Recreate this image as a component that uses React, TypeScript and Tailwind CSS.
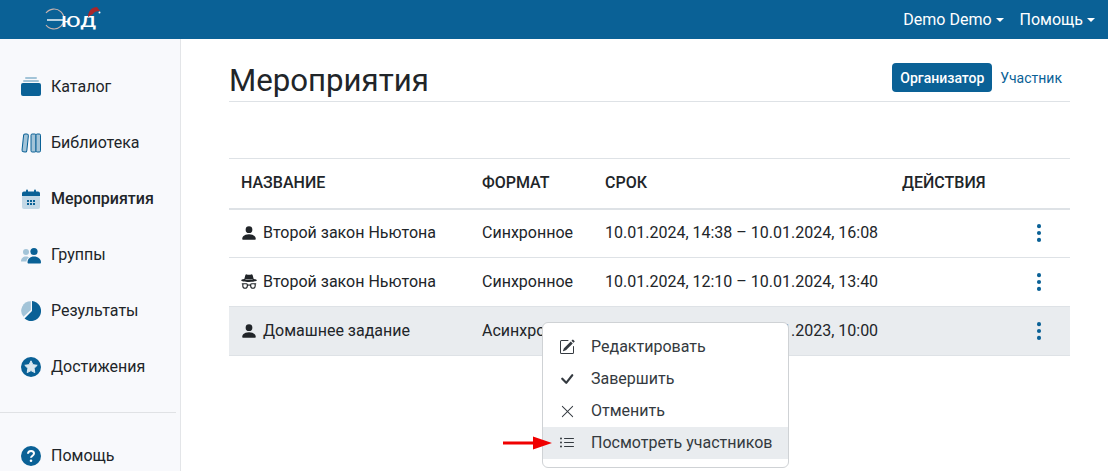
import React from "react";
import { BsPencilSquare, BsCheck, BsXLg, BsListUl, BsPersonFill, BsIncognito, BsThreeDotsVertical } from "react-icons/bs";

const BLUE = "#0a6196";
const LIGHT = "#a3c4d8";

const Catalog = () => (
  <svg width="20" height="20" viewBox="0 0 20 20">
    <rect x="4" y="0" width="12" height="2" rx="1" fill={LIGHT} />
    <rect x="2" y="3" width="16" height="2" rx="1" fill={LIGHT} />
    <rect x="0" y="6" width="20" height="13" rx="2" fill={BLUE} />
  </svg>
);
const Library = () => (
  <svg width="20" height="20" viewBox="0 0 20 20">
    <rect x="1.800" y="1" width="4.800" height="18" rx="1.600" fill={LIGHT} stroke={BLUE} strokeWidth="1" transform="rotate(6 4.400 10)" />
    <rect x="10" y="1" width="5" height="18" rx="1.200" fill={LIGHT} stroke={BLUE} strokeWidth="1" />
    <rect x="15" y="1" width="4.500" height="18" rx="1.200" fill={LIGHT} stroke={BLUE} strokeWidth="1" />
  </svg>
);
const Calendar = () => (
  <svg width="20" height="20" viewBox="0 0 20 20">
    <rect x="1" y="6" width="18" height="14" rx="2" fill="#c3d8e6" />
    <path d="M3 2.500h14a2 2 0 0 1 2 2V7H1V4.500a2 2 0 0 1 2-2z" fill={BLUE} />
    <rect x="5" y="0.500" width="2" height="4" rx="1" fill={BLUE} />
    <rect x="13" y="0.500" width="2" height="4" rx="1" fill={BLUE} />
    {[6, 9, 12].map((x) =>
      [11, 14].map((y) => <rect key={`${x}-${y}`} x={x} y={y} width="2" height="2" fill={BLUE} />)
    )}
  </svg>
);
const Groups = () => (
  <svg width="20" height="20" viewBox="0 0 20 20">
    <g transform="translate(0 1.500)">
      <circle cx="5" cy="5.500" r="3" fill={LIGHT} />
      <path d="M0 15c0-3 2-5 5-5 1.500 0 2.500.5 3 1-1.500 1-2.500 2.500-2.500 4z" fill={LIGHT} />
      <circle cx="13" cy="5" r="3.600" fill={BLUE} />
      <path d="M6.500 16c0-3.500 2.500-6 6.500-6s7 2.500 7 6c0 .5-.5 1-1 1H7.500c-.5 0-1-.5-1-1z" fill={BLUE} />
    </g>
  </svg>
);
const Results = () => (
  <svg width="20" height="20" viewBox="0 0 20 20">
    <path d="M11 0 A10 10 0 1 1 3.500 17.500 L11 10 Z" fill={BLUE} />
    <path d="M9.800 0.200 A9.500 9.500 0 0 0 2.500 15.800 L9.800 9 Z" fill={LIGHT} />
  </svg>
);
const Star = () => (
  <svg width="20" height="20" viewBox="0 0 20 20">
    <circle cx="10" cy="10" r="10" fill={BLUE} />
    <path d="M10 3.800l1.900 3.900 4.300.6-3.100 3 .7 4.300-3.800-2-3.800 2 .7-4.300-3.100-3 4.300-.6z" fill="#dbe8f0" stroke="#dbe8f0" strokeWidth="1" strokeLinejoin="round" />
  </svg>
);
const Help = () => (
  <svg width="20" height="20" viewBox="0 0 20 20">
    <circle cx="10" cy="10" r="10" fill={BLUE} />
    <path d="M7 7.800C7 6 8.400 5 10.100 5 11.800 5 13 6.100 13 7.500c0 2.200-3 2.200-3 4.300" fill="none" stroke="#fff" strokeWidth="2" />
    <circle cx="10" cy="14.800" r="1.300" fill="#fff" />
  </svg>
);

const Caret = () => (
  <span className="ml-[4px] inline-block w-0 h-0 border-x-[4.8px] border-x-transparent border-t-[4.8px] border-t-white align-[3px]" />
);

const nav = [
  { label: "Каталог", icon: <Catalog /> },
  { label: "Библиотека", icon: <Library /> },
  { label: "Мероприятия", icon: <Calendar />, active: true },
  { label: "Группы", icon: <Groups /> },
  { label: "Результаты", icon: <Results /> },
  { label: "Достижения", icon: <Star /> },
];

const rows = [
  { icon: <BsPersonFill size={18} className="shrink-0" />, name: "Второй закон Ньютона", format: "Синхронное", term: "10.01.2024, 14:38 – 10.01.2024, 16:08" },
  { icon: <BsIncognito size={18} className="shrink-0" />, name: "Второй закон Ньютона", format: "Синхронное", term: "10.01.2024, 12:10 – 10.01.2024, 13:40" },
  { icon: <BsPersonFill size={18} className="shrink-0" />, name: "Домашнее задание", format: "Асинхронное", term: "10.01.2023, 10:00 – 10.01.2023, 10:00", active: true },
];

const menu = [
  { label: "Редактировать", icon: <BsPencilSquare size={16} className="shrink-0" /> },
  { label: "Завершить", icon: <BsCheck size={24} className="shrink-0" /> },
  { label: "Отменить", icon: <BsXLg size={15} className="shrink-0" /> },
  { label: "Посмотреть участников", icon: <BsListUl size={16} className="shrink-0" />, active: true },
];

export default function App() {
  return (
    <div className="w-[1108px] h-[471px] overflow-hidden flex flex-col bg-white text-[#212529] text-base font-['Roboto',sans-serif]">
      <header className="h-[39px] shrink-0 bg-[#0a6196] flex items-center justify-between pl-[44px] pr-[13px] text-white">
        <svg width="58" height="30" viewBox="0 0 58 30" className="mt-[-3px]">
          <path d="M2 10 A10 10 0 1 1 2 22" fill="none" stroke="#c9b3ae" strokeWidth="1.200" />
          <path d="M3 17H19" stroke="#fff" strokeWidth="1.400" />
          <text x="17" y="23.500" fill="#fff" fontSize="15" fontWeight="500" fontFamily="Roboto, sans-serif" textLength="35" lengthAdjust="spacingAndGlyphs">ЮД</text>
          <path d="M44 14 C44 8 48 4 53 4 L56 8 C52 8 50 9 49 11 z" fill="#a8262a" />
          <circle cx="55.500" cy="9.500" r="1" fill="#fff" />
        </svg>
        <div className="flex items-center gap-[16px]">
          <span>Demo Demo<Caret /></span>
          <span>Помощь<Caret /></span>
        </div>
      </header>
      <div className="flex flex-1 min-h-0">
        <aside className="w-[181px] shrink-0 bg-[#f8f9fc] border-r border-[#e3e5e8] pt-[20px]">
          {nav.map((n) => (
            <div key={n.label} className={`h-[56px] flex items-center pl-[21px] gap-[10px] ${n.active ? "font-medium" : ""}`}>
              {n.icon}
              <span>{n.label}</span>
            </div>
          ))}
          <div className="mt-[17px] mb-[15px] border-t border-[#e0e2e5] mr-[4px]" />
          <div className="h-[56px] flex items-center pl-[21px] gap-[10px]">
            <Help />
            <span>Помощь</span>
          </div>
        </aside>
        <main className="flex-1 pl-[48px] pr-[38px] relative">
          <div className="h-[63px] flex items-start justify-between border-b border-[#dee2e6]">
            <h1 className="text-[31.2px] leading-[38px] mt-[23px] font-normal">Мероприятия</h1>
            <div className="flex items-center mr-[8px] mt-[24px] gap-[8px] text-sm">
              <span className="h-[29px] w-[100px] rounded-[4px] bg-[#0a6196] text-white font-medium flex items-center justify-center">Организатор</span>
              <span className="text-[#0a6196]">Участник</span>
            </div>
          </div>
          <table className="w-[841px] table-fixed mt-[56px] border-collapse border-t border-[#dee2e6]">
            <colgroup>
              <col className="w-[241px]" />
              <col className="w-[123px]" />
              <col className="w-[297px]" />
              <col className="w-[180px]" />
            </colgroup>
            <thead>
              <tr className="h-[50px] border-b-2 border-[#dee2e6] text-left">
                <th className="px-[12px] font-medium">НАЗВАНИЕ</th>
                <th className="px-[12px] font-medium">ФОРМАТ</th>
                <th className="px-[12px] font-medium">СРОК</th>
                <th className="px-[12px] font-medium">ДЕЙСТВИЯ</th>
              </tr>
            </thead>
            <tbody>
              {rows.map((r, i) => (
                <tr key={i} className={`h-[49px] border-b border-[#dee2e6] ${r.active ? "bg-[#e9ecef]" : ""}`}>
                  <td className="px-[12px]">
                    <span className="flex items-center">
                      <span className="w-[16px] mr-[6px] flex justify-center text-[#212529] mt-[-1px]">{r.icon}</span>
                      {r.name}
                    </span>
                  </td>
                  <td className="px-[12px] whitespace-nowrap">{r.format}</td>
                  <td className="px-[12px] whitespace-nowrap">{r.term}</td>
                  <td className="pr-[20px]">
                    <span className="flex justify-end text-[#0a6196]"><BsThreeDotsVertical size={22} /></span>
                  </td>
                </tr>
              ))}
            </tbody>
          </table>
          <div className="absolute left-[361px] top-[283px] w-[247px] py-[8px] bg-white border border-[#cfd2d5] rounded-[6px] text-[#343a40]">
            {menu.map((m) => (
              <div key={m.label} className={`h-[32px] flex items-center pl-[16px] ${m.active ? "bg-[#e9ecef]" : ""}`}>
                <span className="w-[16px] mr-[16px] flex justify-center">{m.icon}</span>
                <span className="whitespace-nowrap">{m.label}</span>
              </div>
            ))}
          </div>
          <svg width="50" height="14" viewBox="0 0 50 14" className="absolute left-[322px] top-[397px]">
            <path d="M0 5.500h30V0.500L49 7 30 13.500V8.500H0z" fill="#f00000" />
          </svg>
        </main>
      </div>
    </div>
  );
}
